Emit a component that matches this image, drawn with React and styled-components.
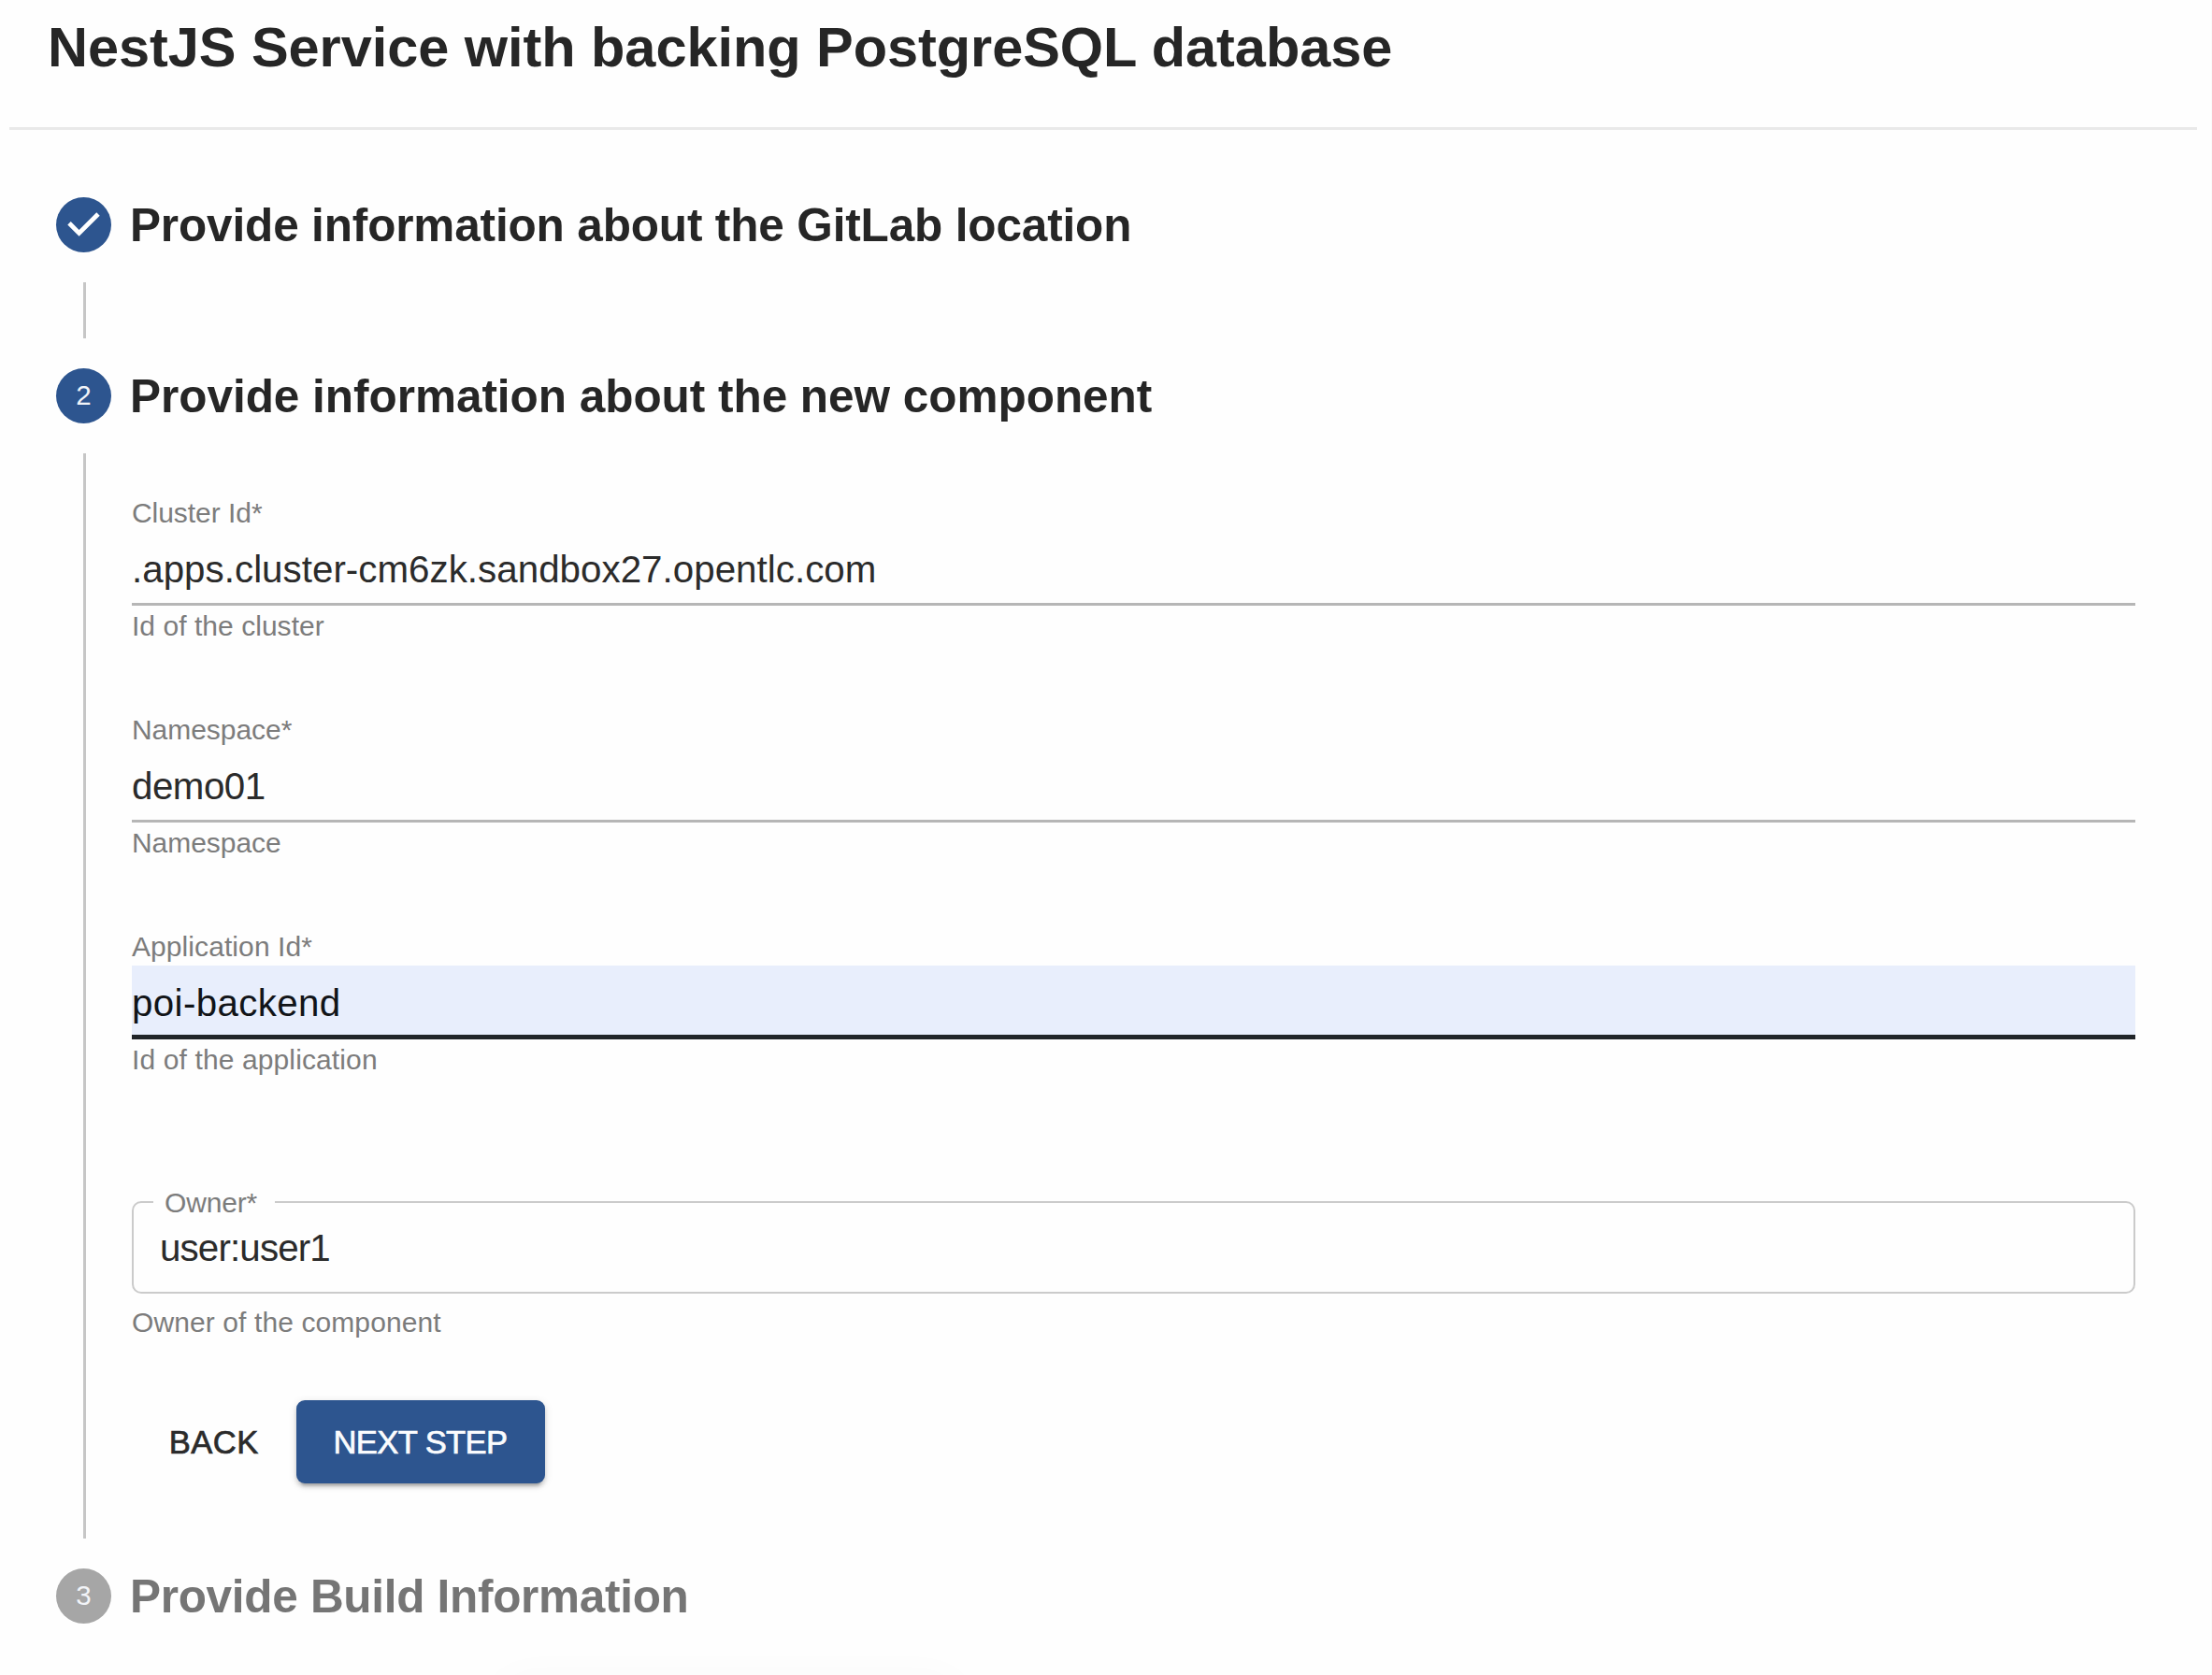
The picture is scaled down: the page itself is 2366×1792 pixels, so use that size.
import React from 'react';
import styled, { createGlobalStyle } from 'styled-components';

const Global = createGlobalStyle`
  *, *::before, *::after { box-sizing: border-box; }
  body {
    margin: 0;
    background: #fefefe;
    color: #262626;
    font-family: "Liberation Sans", Arial, sans-serif;
  }
`;

const Page = styled.main`
  position: relative;
  height: 1792px;
  overflow: hidden;
  border-right: 1px solid #fafafa;
`;

const Header = styled.header`
  margin: 0 15px 0 10px;
  padding: 16px 0 50px 41px;
  border-bottom: 3px solid #e9e9e9;
`;

const Title = styled.h1`
  margin: 0;
  font-size: 59.5px;
  line-height: 70px;
  letter-spacing: -0.05px;
  white-space: nowrap;
`;

const Stepper = styled.section`
  display: flex;
  flex-direction: column;
  gap: 32px;
  padding: 72px 81px 0 60px;
`;

const StepRow = styled.div`
  display: flex;
  align-items: center;
  gap: 20px;
  height: 59px;
`;

const StepIcon = styled.span`
  display: flex;
  align-items: center;
  justify-content: center;
  width: 59px;
  height: 59px;
  border-radius: 50%;
  background: ${({ $muted }) => ($muted ? '#a6a6a6' : '#2d558f')};
  color: #f2f4f8;
  font-size: 29.5px;
  line-height: 57px;
  padding-bottom: 2px;
`;

const CheckIcon = styled.svg`
  width: 59px;
  height: 59px;
  margin-bottom: -2px;
  fill: #fff;
`;

const StepLabel = styled.h2`
  margin: 0;
  font-size: 49.5px;
  line-height: 59px;
  letter-spacing: ${({ $track = 0 }) => $track}px;
  white-space: nowrap;
  color: ${({ $muted }) => ($muted ? '#757575' : '#262626')};
`;

const StepBody = styled.div`
  margin-left: 29px;
  min-height: 60px;
  border-left: 3px solid #c6c6c6;
`;

const Form = styled.form`
  display: flex;
  flex-direction: column;
  padding: 46px 0 59px 49px;
`;

const Field = styled.div`
  margin-bottom: 75px;
`;

const Caption = styled.div`
  font-size: 30px;
  line-height: 36px;
  letter-spacing: ${({ $track = -0.05 }) => $track}px;
  color: #7c7c7c;
`;

const Label = styled(Caption)`
  margin-bottom: 2px;
`;

const Helper = styled(Caption)`
  margin-top: ${({ $gap = 4 }) => $gap}px;
`;

const Value = styled.div`
  font-size: 40.3px;
  line-height: 46px;
  letter-spacing: ${({ $track = 0 }) => $track}px;
  color: ${({ $focused }) => ($focused ? '#111418' : '#2b2b2b')};
`;

const Underlined = styled(Value)`
  height: 79px;
  padding-top: 18px;
  background: ${({ $focused }) => ($focused ? '#e8eefc' : 'transparent')};
  border-bottom: ${({ $focused }) => ($focused ? '5px solid #212529' : '3px solid #b6b6b6')};
`;

const Outline = styled.fieldset`
  min-width: 0;
  height: 116px;
  margin: 41px 0 0;
  padding: 9px 28px 0;
  border: 2px solid #cbcbcb;
  border-radius: 10px;
`;

const Legend = styled.legend`
  width: 130px;
  margin-left: -7px;
  padding: 1px 0 0 12px;
  font-size: 30px;
  line-height: 35px;
  letter-spacing: -0.15px;
  color: #7c7c7c;
`;

const Actions = styled.div`
  display: flex;
  margin-top: 65px;
`;

const Button = styled.button`
  width: ${({ $width }) => $width}px;
  height: 89px;
  padding: 0;
  border: 0;
  border-radius: 9px;
  font-family: inherit;
  font-size: 34.6px;
  line-height: 60px;
  letter-spacing: ${({ $track = 0 }) => $track}px;
  white-space: nowrap;
  -webkit-text-stroke: 0.7px currentColor;
  color: ${({ $primary }) => ($primary ? '#fbfcfe' : '#2b2b2b')};
  background: ${({ $primary }) => ($primary ? '#2d558f' : 'transparent')};
  box-shadow: ${({ $primary }) =>
    $primary
      ? '0 7px 3px -5px rgba(0,0,0,.2), 0 4px 4px rgba(0,0,0,.14), 0 2px 10px rgba(0,0,0,.12)'
      : 'none'};
`;

const Toast = styled.div`
  position: absolute;
  left: 540px;
  top: 1800px;
  width: 480px;
  height: 80px;
  box-shadow: 0 0 50px rgba(0, 0, 0, 0.03);
`;

const Check = () => (
  <CheckIcon viewBox="0 0 24 24">
    <path d="M10 17l-5-5 1.4-1.4 3.6 3.6 7.6-7.6L19 8l-9 9z" />
  </CheckIcon>
);

const fields = [
  {
    label: 'Cluster Id*',
    value: '.apps.cluster-cm6zk.sandbox27.opentlc.com',
    valueTrack: 0.03,
    helper: 'Id of the cluster',
    helperTrack: 0.04,
  },
  { label: 'Namespace*', value: 'demo01', valueTrack: -0.5, helper: 'Namespace' },
  {
    label: 'Application Id*',
    labelTrack: 0.08,
    value: 'poi-backend',
    valueTrack: 0.37,
    helper: 'Id of the application',
    helperTrack: 0.12,
    focused: true,
  },
];

export default function App() {
  return (
    <Page>
      <Global />
      <Header>
        <Title>NestJS Service with backing PostgreSQL database</Title>
      </Header>
      <Stepper>
        <StepRow>
          <StepIcon><Check /></StepIcon>
          <StepLabel $track={-0.15}>Provide information about the GitLab location</StepLabel>
        </StepRow>
        <StepBody />
        <StepRow>
          <StepIcon>2</StepIcon>
          <StepLabel $track={-0.03}>Provide information about the new component</StepLabel>
        </StepRow>
        <StepBody>
          <Form>
            {fields.map((f) => (
              <Field key={f.label}>
                <Label $track={f.labelTrack}>{f.label}</Label>
                <Underlined $focused={f.focused} $track={f.valueTrack}>{f.value}</Underlined>
                <Helper $track={f.helperTrack}>{f.helper}</Helper>
              </Field>
            ))}
            <Outline>
              <Legend>Owner*</Legend>
              <Value $track={-0.85}>user:user1</Value>
            </Outline>
            <Helper $gap={13} $track={0.1}>Owner of the component</Helper>
            <Actions>
              <Button type="button" $width={175.5} $track={0.5}>BACK</Button>
              <Button type="button" $width={266} $track={-0.6} $primary>NEXT STEP</Button>
            </Actions>
          </Form>
        </StepBody>
        <StepRow>
          <StepIcon $muted>3</StepIcon>
          <StepLabel $muted $track={-0.3}>Provide Build Information</StepLabel>
        </StepRow>
      </Stepper>
      <Toast />
    </Page>
  );
}
